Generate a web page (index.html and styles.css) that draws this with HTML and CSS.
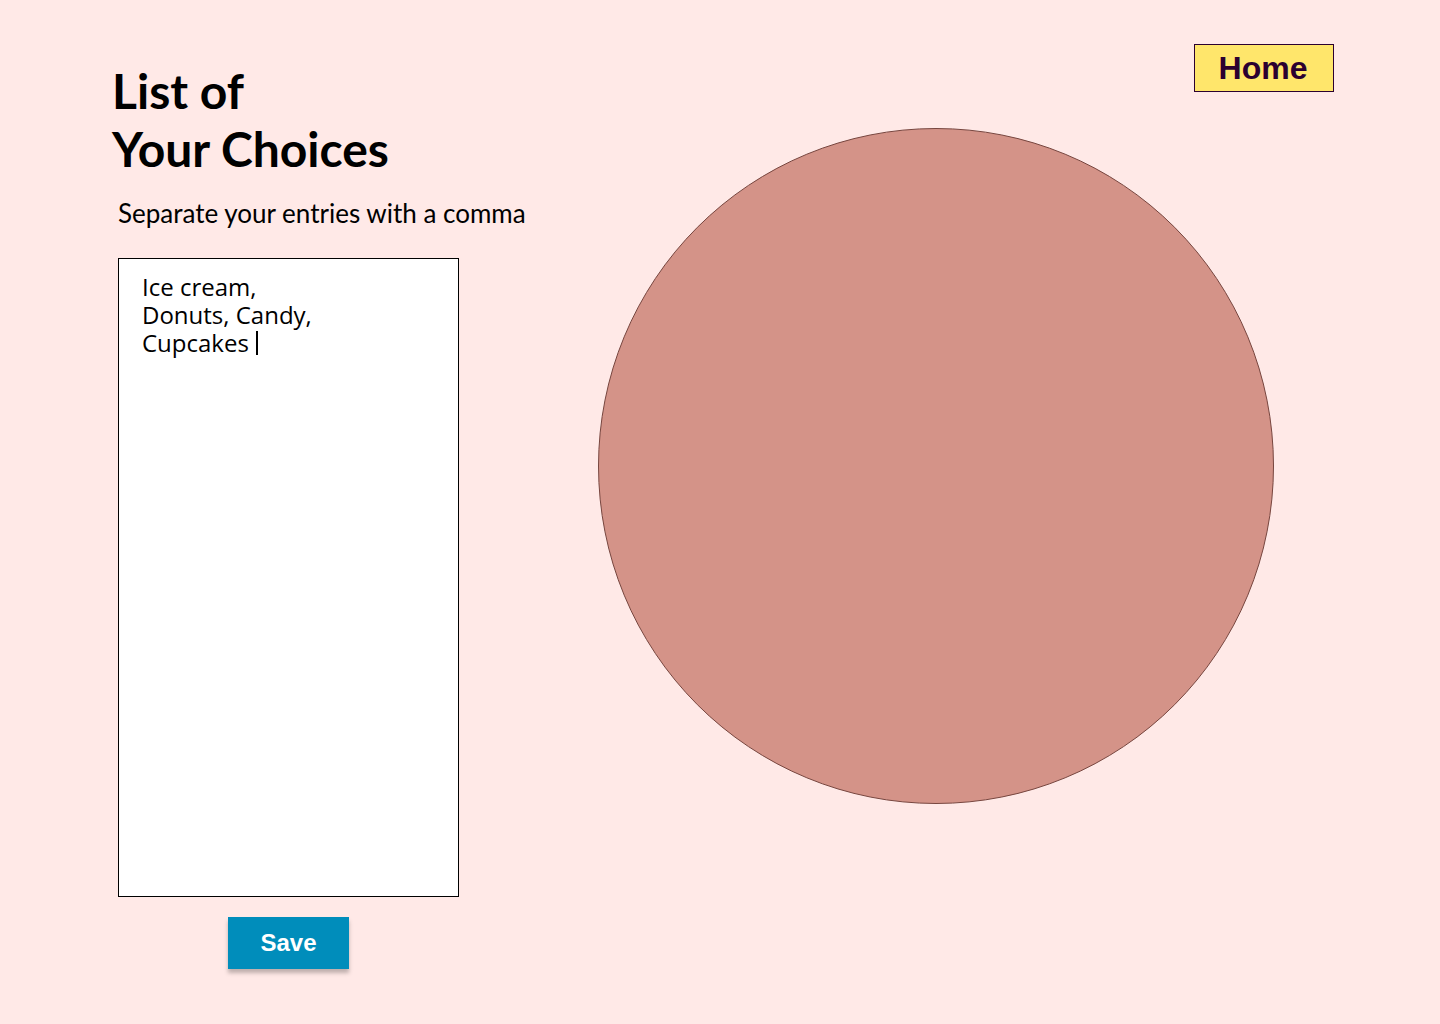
FILE: index.html
```html
<!DOCTYPE html>
<html lang="en">
<head>
<meta charset="utf-8">
<meta name="viewport" content="width=device-width, initial-scale=1">
<title>List of Your Choices</title>
<link rel="stylesheet" href="styles.css">
</head>
<body>
<main class="page">
  <form class="choices">
    <h1 class="title">List of<br>Your Choices</h1>
    <label class="hint" for="entries">Separate your entries with a comma</label>
    <div class="editor">
      <textarea class="entries" id="entries" spellcheck="false">Ice cream,
Donuts, Candy,
Cupcakes </textarea>
      <span class="caret" aria-hidden="true"></span>
    </div>
    <button class="save" type="button">Save</button>
  </form>
  <section class="board">
    <button class="home" type="button">Home</button>
    <div class="wheel"></div>
  </section>
</main>
</body>
</html>
```

FILE: styles.css
```css
* {
  box-sizing: border-box;
}

body {
  margin: 0;
  min-height: 100vh;
  background: #ffe9e7;
  color: #000;
  font-family: Lato, sans-serif;
}

.page {
  display: flex;
  gap: 70px;
  padding: 44px 106px 54px 112px;
}

.choices {
  flex: 0 0 416px;
  display: flex;
  flex-direction: column;
}

.title {
  margin: 18px 0 0;
  font-size: 48px;
  line-height: 58px;
  font-weight: 700;
}

.hint {
  margin: 18px 0 28px 6px;
  font-size: 26px;
  line-height: 34px;
  white-space: nowrap;
}

.editor {
  position: relative;
  width: 341px;
  margin-left: 6px;
}

.entries {
  display: block;
  width: 100%;
  height: 639px;
  padding: 14px 23px;
  border: 1px solid #000;
  border-radius: 0;
  outline: 0;
  resize: none;
  background: #fff;
  color: #000;
  font-family: "Open Sans", sans-serif;
  font-size: 24px;
  font-weight: 400;
  line-height: 28px;
}

.caret {
  position: absolute;
  left: 138px;
  top: 73px;
  width: 2px;
  height: 24px;
  background: #000;
}

.save {
  width: 121px;
  height: 52px;
  margin: 20px 0 0 116px;
  padding: 0;
  border: 0;
  background: #008dbb;
  box-shadow: 0 4px 4px rgba(0, 0, 0, 0.25);
  color: #fff;
  font-family: "Liberation Sans", Arial, sans-serif;
  font-size: 24px;
  font-weight: 700;
}

.board {
  flex: 1;
  display: flex;
  flex-direction: column;
}

.home {
  align-self: flex-end;
  width: 140px;
  height: 48px;
  padding: 0 2px 0 0;
  border: 1px solid #2b0030;
  background: #ffe66b;
  color: #2b0030;
  font-family: "Liberation Sans", Arial, sans-serif;
  font-size: 32px;
  font-weight: 700;
}

.wheel {
  width: 100%;
  max-width: 676px;
  aspect-ratio: 1;
  margin-top: 36px;
  border: 1px solid #77463f;
  border-radius: 50%;
  background: #d49388;
}
```
